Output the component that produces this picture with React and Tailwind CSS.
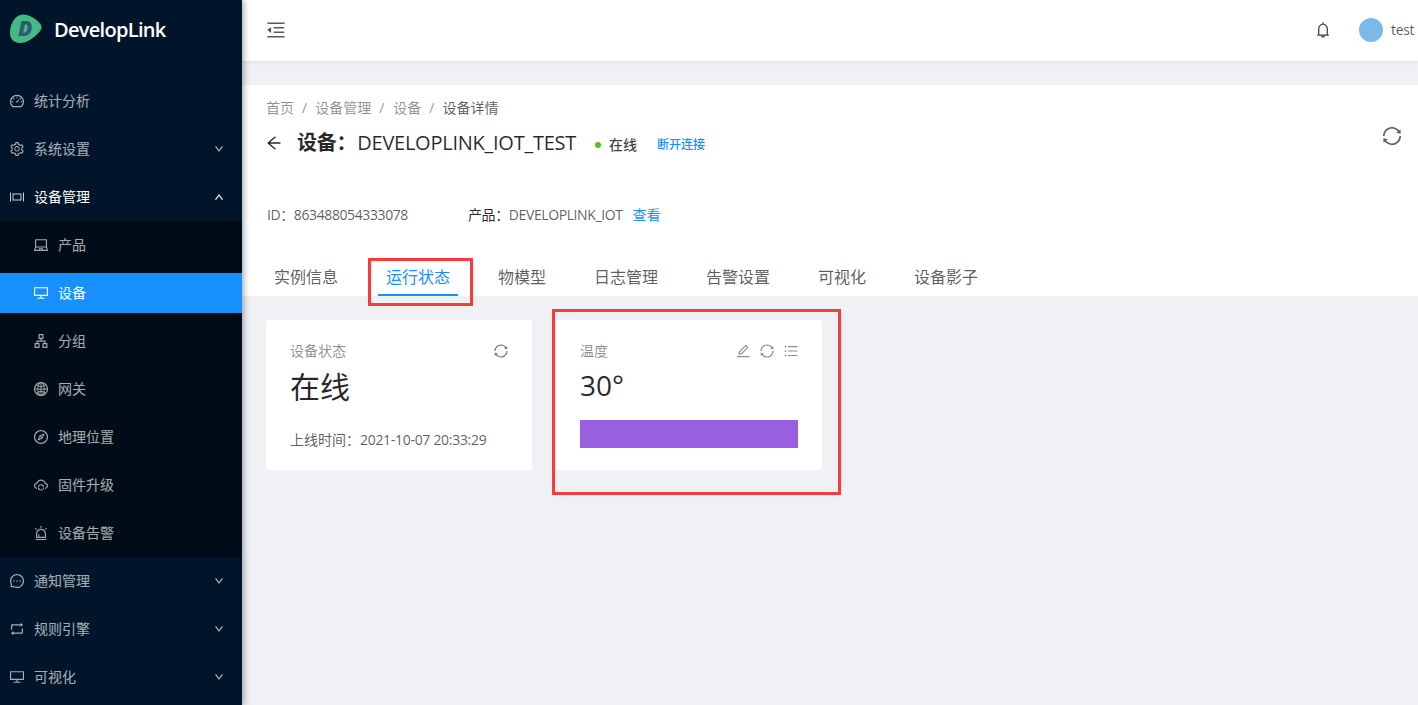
import React from "react";
import {
  AiOutlineDashboard,
  AiOutlineSetting,
  AiOutlineLaptop,
  AiOutlineDesktop,
  AiOutlineApartment,
  AiOutlineGlobal,
  AiOutlineCompass,
  AiOutlineCloudSync,
  AiOutlineAlert,
  AiOutlineMessage,
  AiOutlineRetweet,
  AiOutlineDown,
  AiOutlineUp,
  AiOutlineBell,
  AiOutlineSync,
  AiOutlineMenuFold,
  AiOutlineArrowLeft,
  AiOutlineEdit,
  AiOutlineUnorderedList,
} from "react-icons/ai";

// no matching icon in the package for this one
function DeviceIcon({ className }) {
  return (
    <svg viewBox="0 0 14 14" className={className} fill="none" stroke="currentColor" strokeWidth="1">
      <path d="M0.5 2.5v9M13.5 2.5v9" />
      <rect x="3" y="4" width="8" height="6" />
    </svg>
  );
}

function Logo() {
  return (
    <svg viewBox="0 0 32 30" className="w-8 h-[30px]">
      <path
        d="M13 0.5c6 0 13 4 17 9 3 3.6 1.5 6.5-2 10-5 4.800-11 9.500-18 9.500-5.500 0-10-3.500-10-10C0 10 5 0.500 13 0.500z"
        fill="#46ba85"
      />
      <text x="8" y="22" fontSize="21" fontWeight="800" fontStyle="italic" fontFamily="Open Sans" fill="#2f5b70">
        D
      </text>
    </svg>
  );
}

const topMenu = [
  { label: "统计分析", icon: AiOutlineDashboard },
  { label: "系统设置", icon: AiOutlineSetting, arrow: true },
];

const subMenu = [
  { label: "产品", icon: AiOutlineLaptop },
  { label: "设备", icon: AiOutlineDesktop, active: true },
  { label: "分组", icon: AiOutlineApartment },
  { label: "网关", icon: AiOutlineGlobal },
  { label: "地理位置", icon: AiOutlineCompass },
  { label: "固件升级", icon: AiOutlineCloudSync },
  { label: "设备告警", icon: AiOutlineAlert },
];

const bottomMenu = [
  { label: "通知管理", icon: AiOutlineMessage },
  { label: "规则引擎", icon: AiOutlineRetweet },
  { label: "可视化", icon: AiOutlineDesktop },
];

const tabs = ["实例信息", "运行状态", "物模型", "日志管理", "告警设置", "可视化", "设备影子"];

function MenuItem({ label, icon: Icon, arrow }) {
  return (
    <div className="h-10 flex items-center pl-[9px] pr-[18px] text-white/65">
      <Icon className="w-4 h-4" />
      <span className="ml-[9px] flex-1">{label}</span>
      {arrow && <AiOutlineDown className="w-2.5 h-2.5" stroke="currentColor" strokeWidth={50} />}
    </div>
  );
}

export default function App() {
  return (
    <div
      className="h-[705px] flex overflow-hidden bg-[#f0f1f5] text-sm text-black/65"
      style={{ fontFamily: '"Open Sans", "Noto Sans CJK SC", sans-serif' }}
    >
      <aside className="w-[242px] shrink-0 bg-[#001529] shadow-[2px_0_6px_rgba(0,21,41,0.35)] z-10">
        <div className="h-[81px] flex items-start pl-2.5 pt-3.5">
          <Logo />
          <span className="ml-3 text-xl leading-8 font-semibold text-white tracking-[-0.7px]">DevelopLink</span>
        </div>
        <div className="flex flex-col gap-2">
          {topMenu.map((m) => (
            <MenuItem key={m.label} {...m} />
          ))}
          <div className="h-10 flex items-center pl-2.5 pr-[18px] text-white">
            <DeviceIcon className="w-3.5 h-3.5 text-white/80" />
            <span className="ml-2.5 flex-1">设备管理</span>
            <AiOutlineUp className="w-2.5 h-2.5" stroke="currentColor" strokeWidth={50} />
          </div>
        </div>
        <div className="mt-1 py-1 flex flex-col gap-2 bg-[#000c17]">
          {subMenu.map((m) => (
            <div
              key={m.label}
              className={
                m.active
                  ? "h-10 flex items-center pl-[33px] bg-[#1890ff] text-white"
                  : "h-10 flex items-center pl-[33px] text-white/65"
              }
            >
              <m.icon className="w-4 h-4" />
              <span className="ml-[9px]">{m.label}</span>
            </div>
          ))}
        </div>
        <div className="mt-1 flex flex-col gap-2">
          {bottomMenu.map((m) => (
            <MenuItem key={m.label} {...m} arrow />
          ))}
        </div>
      </aside>

      <div className="flex-1 min-w-0 flex flex-col relative">
        <header className="h-[61px] shrink-0 bg-white shadow-[0_1px_4px_rgba(0,21,41,0.08)] flex items-center pl-[23px] pr-1 pb-0.5">
          <AiOutlineMenuFold className="w-[22px] h-[22px] text-black/65" />
          <AiOutlineBell className="ml-auto w-[18px] h-[18px] text-black/75" />
          <span className="ml-[27px] w-6 h-6 rounded-full bg-[#7ab9e8]" />
          <span className="ml-2 text-black/65 tracking-[-0.4px]">test</span>
        </header>

        <section className="mt-6 h-[211px] shrink-0 bg-white flex flex-col">
          <div className="flex justify-between pl-6 pr-[15px]">
            <div>
              <div className="mt-3 h-[22px] flex items-center gap-2 text-black/45">
                <span>首页</span>
                <span>/</span>
                <span>设备管理</span>
                <span>/</span>
                <span className="ml-px">设备</span>
                <span>/</span>
                <span className="text-black/65">设备详情</span>
              </div>
              <div className="mt-2.5 h-7 flex items-center">
                <AiOutlineArrowLeft className="-ml-px w-[18px] h-[18px] text-black/85" />
                <span className="ml-3.5 text-xl font-medium text-black/85 tracking-[-0.25px]">
                  <span className="font-bold">设备：</span>
                  <span className="ml-px">DEVELOPLINK_IOT_TEST</span>
                </span>
                <span className="ml-[19px] mt-1 w-1.5 h-1.5 rounded-full bg-[#52c41a]" />
                <span className="ml-2 mt-1 font-medium text-black/75">在线</span>
                <span className="ml-5 mt-1 text-xs font-medium text-[#1890ff]">断开连接</span>
              </div>
            </div>
            <AiOutlineSync className="mt-10 w-[22px] h-[22px] text-black/65" />
          </div>
          <div className="mt-[47px] h-[22px] pl-[25px] flex items-center">
            <span className="w-[201px] tracking-[-0.4px]">ID：863488054333078</span>
            <span className="tracking-[-0.4px]">
              <span className="text-black/85">产品：</span>DEVELOPLINK_IOT
            </span>
            <span className="ml-2.5 text-[#1890ff]">查看</span>
          </div>
          <nav className="mt-auto pl-6 flex gap-8 text-base">
            {tabs.map((t) => (
              <div
                key={t}
                className={
                  t === "运行状态"
                    ? "px-2 h-[38px] leading-[38px] border-b-2 border-[#1890ff] text-[#1890ff]"
                    : "px-2 h-[38px] leading-[38px] text-black/65"
                }
              >
                {t}
              </div>
            ))}
          </nav>
        </section>

        <main className="pl-6 pt-6 flex gap-6">
          <div className="w-[266px] h-[150px] bg-white rounded-sm pl-6 pr-[23px] pt-5">
            <div className="flex justify-between items-center h-[22px] text-black/45">
              <span>设备状态</span>
              <AiOutlineSync className="w-4 h-4 text-black/55" />
            </div>
            <div className="mt-[5px] text-[30px] leading-[40px] text-black/85">在线</div>
            <div className="mt-[23px] h-[22px]">
              上线时间：<span className="tracking-[-0.3px]">2021-10-07 20:33:29</span>
            </div>
          </div>
          <div className="w-[266px] h-[150px] bg-white rounded-sm px-6 pt-5">
            <div className="flex items-center h-[22px] -mr-px text-black/45">
              <span className="flex-1">温度</span>
              <div className="flex gap-2 text-black/45">
                <AiOutlineEdit className="w-4 h-4" />
                <AiOutlineSync className="w-4 h-4" />
                <AiOutlineUnorderedList className="w-4 h-4" />
              </div>
            </div>
            <div className="mt-1 text-[28px] leading-[38px] text-black/85">30°</div>
            <div className="mt-4 h-7 bg-[#9860e0]" />
          </div>
        </main>

        {/* red annotation boxes on the screenshot */}
        <div className="absolute left-[126px] top-[258px] w-[105px] h-[48px] border-[3px] border-[#fc3a3a]" />
        <div className="absolute left-[310px] top-[309px] w-[289px] h-[186px] border-[3px] border-[#fc3a3a]" />
      </div>
    </div>
  );
}
